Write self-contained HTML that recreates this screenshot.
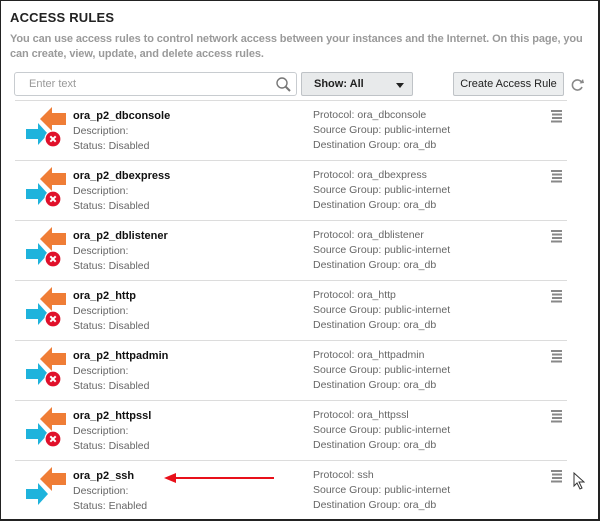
<!DOCTYPE html>
<html><head><meta charset="utf-8"><style>
*{margin:0;padding:0;box-sizing:border-box}
body{width:600px;height:521px;background:#fff;font-family:"Liberation Sans",Arial,sans-serif;overflow:hidden;position:relative}
.frame{position:absolute;left:0;top:0;width:600px;height:521px;border:1px solid #222;border-bottom:2px solid #222;border-right:2px solid #222}
.t{position:absolute;white-space:nowrap}
h1{position:absolute;left:10px;top:10px;font-size:13px;font-weight:bold;color:#222;letter-spacing:0.2px}
.intro{position:absolute;left:10px;top:32px;font-size:11px;color:#9a9a9a;font-weight:bold;line-height:15px;width:590px;letter-spacing:-0.1px}
.search{position:absolute;left:14px;top:72px;width:283px;height:24px;border:1px solid #c8ccd0;border-radius:3px;background:#fff}
.search span{position:absolute;left:14px;top:5px;font-size:11px;color:#999}
.show{position:absolute;left:301px;top:72px;width:112px;height:24px;border:1px solid #bfc3c7;border-radius:2px;background:#e8eaeb}
.show span{position:absolute;left:12px;top:5px;font-size:11px;color:#222}
.btn{position:absolute;left:453px;top:72px;width:111px;height:24px;border:1px solid #bfc3c7;border-radius:2px;background:#eceeef;font-size:11px;color:#222;text-align:center;line-height:22px}
.sep{position:absolute;left:15px;width:552px;height:1px;background:#dcdcdc}
.name{font-size:11px;font-weight:bold;color:#111}
.g{font-size:10.5px;color:#666}
</style></head><body>
<h1>ACCESS RULES</h1>
<div class="intro">You can use access rules to control network access between your instances and the Internet. On this page, you can create, view, update, and delete access rules.</div>
<div class="search"><span>Enter text</span>
<svg style="position:absolute;left:260px;top:3px" width="18" height="18"><circle cx="7" cy="7" r="5" fill="none" stroke="#777" stroke-width="1.4"/><line x1="10.5" y1="10.5" x2="15" y2="15" stroke="#777" stroke-width="2"/></svg></div>
<div class="show"><span><b>Show: All</b></span><svg style="position:absolute;left:94px;top:10px" width="8" height="5"><path d="M0 0H8L4 5Z" fill="#222"/></svg></div>
<div class="btn">Create Access Rule</div>
<svg style="position:absolute;left:571px;top:78px" width="14" height="14"><path d="M11 5A5 5 0 1 0 11 9" fill="none" stroke="#888" stroke-width="1.6"/><path d="M8.5 5.5L13 5L12 1Z" fill="#888"/></svg>
<div id="rows"></div>
<script>
var d=[["ora_p2_dbconsole","ora_dbconsole",0],["ora_p2_dbexpress","ora_dbexpress",0],["ora_p2_dblistener","ora_dblistener",0],["ora_p2_http","ora_http",0],["ora_p2_httpadmin","ora_httpadmin",0],["ora_p2_httpssl","ora_httpssl",0],["ora_p2_ssh","ssh",1]];
var h="";
d.forEach(function(r,i){var y=100+i*60;
h+='<div class="sep" style="top:'+y+'px"></div>';
h+='<svg style="position:absolute;left:24px;top:'+(y+4)+'px" width="44" height="52"><path d="M16 15L28 3V9H42V21H28V27Z" fill="#ef7d36"/><path d="M2 25H14V19L24 30L14 41V35H2Z" fill="#1eb3dc"/>'+(r[2]?'':'<circle cx="29" cy="35" r="8" fill="#e0102a" stroke="#fff" stroke-width="1.2"/><path d="M26.3 32.3L31.7 37.7M31.7 32.3L26.3 37.7" stroke="#fff" stroke-width="2"/>')+'</svg>';
h+='<div class="t name" style="left:73px;top:'+(y+10)+'px">'+r[0]+'</div>';
h+='<div class="t g" style="left:73px;top:'+(y+25)+'px">Description:</div>';
h+='<div class="t g" style="left:73px;top:'+(y+40)+'px">Status: '+(r[2]?'Enabled':'Disabled')+'</div>';
h+='<div class="t g" style="left:313px;top:'+(y+9)+'px">Protocol: '+r[1]+'</div>';
h+='<div class="t g" style="left:313px;top:'+(y+24)+'px">Source Group: public-internet</div>';
h+='<div class="t g" style="left:313px;top:'+(y+39)+'px">Destination Group: ora_db</div>';
h+='<svg style="position:absolute;left:551px;top:'+(y+10)+'px" width="12" height="13"><rect x="0" y="0" width="11" height="2" fill="#888"/><rect x="1" y="3.5" width="10" height="2" fill="#888"/><rect x="1" y="7" width="10" height="2" fill="#888"/><rect x="0" y="10.5" width="11" height="2" fill="#888"/></svg>';
});
document.getElementById("rows").innerHTML=h;
</script>
<svg style="position:absolute;left:164px;top:472px" width="112" height="12"><path d="M0 6L12 1V11Z" fill="#e8101a"/><rect x="10" y="5" width="100" height="2" fill="#e8101a"/></svg>
<svg style="position:absolute;left:573px;top:472px" width="12" height="18"><path d="M1 1V14L4 11L7 17L9 16L6 10H11Z" fill="#fff" stroke="#333" stroke-width="1"/></svg>
<div class="frame"></div>
</body></html>
